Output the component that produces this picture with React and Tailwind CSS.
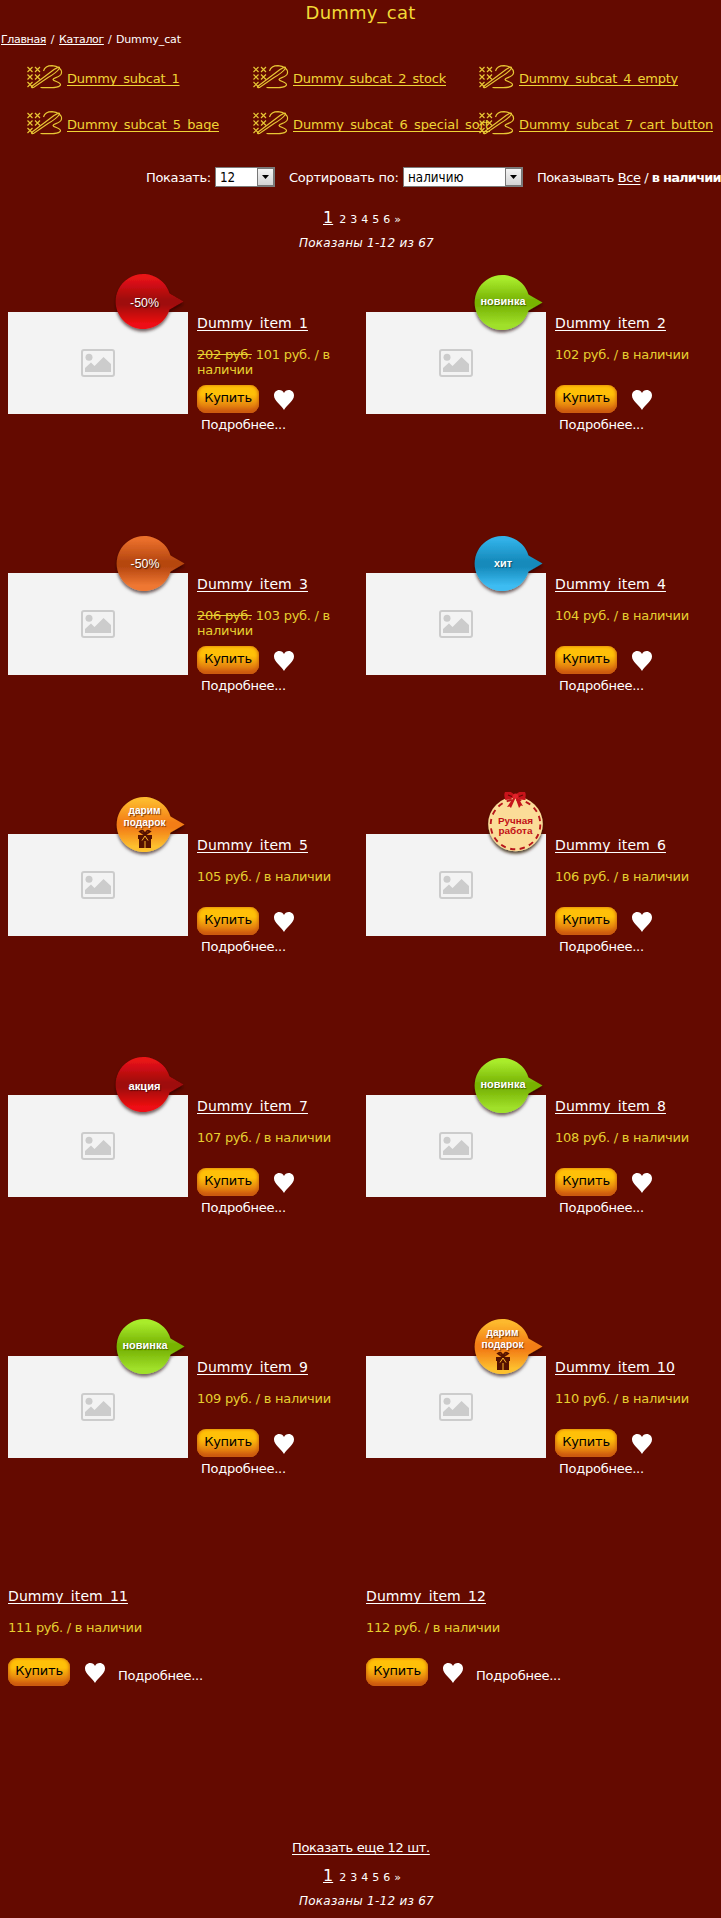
import React from "react";

const subcats = [
  ["Dummy_subcat_1", "tracking-[-0.25px]"],
  ["Dummy_subcat_2_stock", "tracking-[-0.2px]"],
  ["Dummy_subcat_4_empty", "tracking-[-0.26px]"],
  ["Dummy_subcat_5_bage", "tracking-[-0.15px]"],
  ["Dummy_subcat_6_special_sort", "tracking-[-0.1px]"],
  ["Dummy_subcat_7_cart_button", "tracking-[-0.13px]"],
];

const items = [
  { n: 1, old: 202, price: 101, badge: "red", label: "-50%" },
  { n: 2, price: 102, badge: "green", label: "новинка" },
  { n: 3, old: 206, price: 103, badge: "orange", label: "-50%" },
  { n: 4, price: 104, badge: "blue", label: "хит" },
  { n: 5, price: 105, badge: "gift" },
  { n: 6, price: 106, badge: "handmade" },
  { n: 7, price: 107, badge: "red", label: "акция" },
  { n: 8, price: 108, badge: "green", label: "новинка" },
  { n: 9, price: 109, badge: "green", label: "новинка" },
  { n: 10, price: 110, badge: "gift" },
];

const badgeColors = {
  red: ["#e81318", "#9f090b", "#ee0c12"],
  green: ["#a9ec2c", "#78b404", "#a0e02a"],
  orange: ["#ea6f2b", "#b64710", "#ef7733"],
  blue: ["#31b1e8", "#168abb", "#3cbcf2"],
  gift: ["#fdb92d", "#f37d16", "#fdc02f"],
};

function StitchIcon() {
  const crosses = [[0, 2], [7.5, 2], [0, 9.5], [7.5, 9.5], [0, 17]];
  return (
    <svg className="h-6 w-9 shrink-0" viewBox="0 0 36 24" fill="none" stroke="#e8c634" strokeWidth="1.2">
      {crosses.map(([x, y]) => (
        <path key={x + "-" + y} d={`M${x + 0.5} ${y}l5 5M${x + 5.5} ${y}l-5 5`} />
      ))}
      <path d="M4.500 21.500L27 4.500Q34 0 32 4Q29 8 21 12.500L6.500 22.500Q4 23 4.500 21.500Z" />
      <path d="M16.500 6C17.500 2.500 21 0.700 25 0.700C31 1 35 4 34.500 8C34 12.500 26 12.500 26 14.500C26.500 16.500 34 17 33.500 20C32 23.500 22 22.800 13.500 22.500" />
    </svg>
  );
}

function Badge({ type, label }) {
  if (type === "handmade") {
    return (
      <svg className="absolute -top-[42px] left-[114px] h-[72px] w-[72px]" viewBox="0 0 72 72">
        <defs>
          <filter id="hand-shadow" x="-20%" y="-20%" width="150%" height="150%">
            <feDropShadow dx="0" dy="2.500" stdDeviation="1.500" floodColor="#2a1200" floodOpacity="0.8" />
          </filter>
        </defs>
        <circle cx="35.500" cy="32" r="27.300" fill="#fbdc98" filter="url(#hand-shadow)" />
        <circle cx="35.500" cy="32.500" r="24.800" fill="none" stroke="#b8151a" strokeWidth="1.900" strokeDasharray="5.200 4.540" />
        <g fill="#c8141b">
          <path d="M35 4C32-1 26-2 25 0C23 4 26 7 25 8C29 8 33 7 35 4Z" />
          <path d="M35 4C38-1 44-2 45 0C47 4 44 7 46 8C41 8 37 7 35 4Z" />
          <path d="M34 5L27 15L29.500 14.500L31 16L35.500 6L39 16L41 13.500L43 14L37 4Z" />
          <circle cx="35.500" cy="4" r="2.600" fill="#e0232a" />
        </g>
        <path d="M28 3L32 4.500M43 3L39 4.500" stroke="#630a00" strokeWidth="1.300" />
        <g fill="#c20f14" fontFamily="Liberation Sans, sans-serif" fontWeight="700" fontSize="9.500" textAnchor="middle">
          <text x="35.500" y="31.500" textLength="35" lengthAdjust="spacingAndGlyphs">Ручная</text>
          <text x="35.500" y="41.500" textLength="34" lengthAdjust="spacingAndGlyphs">работа</text>
        </g>
      </svg>
    );
  }
  const [top, mid, bottom] = badgeColors[type];
  const discount = label === "-50%";
  const place = type === "red" ? "-top-[42px] left-[103px]" : "-top-[41px] left-[104px]";
  const labelY = type === "red" ? 36.5 : discount ? 36 : label === "хит" ? 35 : 34;
  return (
    <svg className={"absolute h-[72px] w-[80px] " + place} viewBox="0 0 80 72">
      <defs>
        <linearGradient id={"fill-" + type} gradientUnits="userSpaceOnUse" x1="0" y1="5" x2="0" y2="59">
          <stop offset="0.05" stopColor={top} />
          <stop offset="0.45" stopColor={mid} />
          <stop offset="0.55" stopColor={mid} />
          <stop offset="0.9" stopColor={bottom} />
        </linearGradient>
        <filter id={"shadow-" + type} x="-20%" y="-20%" width="150%" height="150%">
          <feDropShadow dx="0" dy="2.500" stdDeviation="1.500" floodColor="#200" floodOpacity="0.6" />
        </filter>
      </defs>
      <path
        d="M58.500 23.500L72.500 31.500L58.500 39.500A27.500 27.500 0 1 1 58.500 23.500Z"
        fill={"url(#fill-" + type + ")"}
        filter={"url(#shadow-" + type + ")"}
      />
      {type === "gift" ? (
        <>
          <g className="[text-shadow:1px_1px_1px_rgba(70,20,0,0.7)]" fill="#fff" fontFamily="Liberation Sans, sans-serif" fontWeight="700" fontSize="10.500" textAnchor="middle">
            <text x="32.500" y="20.500" textLength="32" lengthAdjust="spacingAndGlyphs">дарим</text>
            <text x="32.500" y="32.500" textLength="42" lengthAdjust="spacingAndGlyphs">подарок</text>
          </g>
          <g fill="#551200">
            <path d="M26 42h14v4H26ZM27 46h12v9h-12Z" />
            <path d="M33 42L28 38.500Q32 36 33 42Q34 36 38 38.500Z" fill="none" stroke="#551200" strokeWidth="1.800" />
            <path d="M33 43L30 47.500M33 43L36 47.500M33 48V55" stroke="#fdb62b" strokeWidth="1" />
          </g>
        </>
      ) : (
        <text
          className={discount ? "[text-shadow:1px_1px_1px_rgba(0,0,0,0.7)]" : "[text-shadow:1px_1px_1px_rgba(0,0,0,0.45)]"}
          x={type === "red" ? 33.5 : 33}
          y={labelY}
          fill="#fff"
          fontFamily="Liberation Sans, sans-serif"
          fontWeight={discount ? "400" : "700"}
          fontSize={discount ? "12.500" : "11.500"}
          textAnchor="middle"
          textLength={discount ? 29 : label === "новинка" ? 45 : label === "хит" ? 18 : 32}
          lengthAdjust="spacingAndGlyphs"
        >
          {label}
        </text>
      )}
    </svg>
  );
}

function Placeholder() {
  return (
    <div className="flex h-[102px] w-[180px] items-center justify-center bg-[#f3f3f3]">
      <svg className="h-7 w-[34px]" viewBox="0 0 34 28">
        <rect x="1" y="1" width="32" height="26" rx="2" fill="none" stroke="#cccccc" strokeWidth="2" />
        <circle cx="8" cy="8.300" r="3.500" fill="#cccccc" />
        <path d="M4 23V19L10 13.500L13.500 17L22.500 8L30 15V23Z" fill="#cccccc" />
      </svg>
    </div>
  );
}

function BuyButton() {
  return (
    <button className="h-7 w-[62px] shrink-0 rounded-[9px] bg-linear-to-b from-[#ffc008] from-35% to-[#d4600f] to-95% pb-[2px] text-center text-[13px] leading-[24px] font-normal tracking-[-0.25px] text-black shadow-[inset_0_-2px_4px_#c8540f,inset_0_0_3px_#e08a0c]">
      Купить
    </button>
  );
}

function Heart() {
  return (
    <svg className="h-5 w-5 shrink-0" viewBox="0 0 20 20" fill="#fff">
      <path d="M10 20C7 14.500 0 11 0 5.500C0 2.300 2.300 0 5.200 0C7.500 0 9.200 1.200 10 3C10.800 1.200 12.500 0 14.800 0C17.700 0 20 2.300 20 5.500C20 11 13 14.500 10 20Z" />
    </svg>
  );
}

const titleClass = "block h-5 text-[14px] leading-5 whitespace-nowrap text-white underline [text-decoration-skip-ink:none] underline-offset-2 tracking-[0.1px]";

function Item({ item }) {
  return (
    <div className="flex h-[261px] items-start pt-[42px] pl-2">
      <div className="relative mr-[9px] shrink-0">
        <Placeholder />
        <Badge type={item.badge} label={item.label} />
      </div>
      <div className="w-[150px] pt-px">
        <a className={titleClass}>Dummy_item_{item.n}</a>
        <p className="mt-[14px] h-[38px] w-[145px] text-[13px] leading-[15px] text-[#e6cf30] tracking-[-0.27px]">
          {item.old && <><s>{item.old} руб.</s> </>}
          {item.price} руб. / в наличии
        </p>
        <div className="flex items-start">
          <BuyButton />
          <div className="ml-[15px] pt-[5px]"><Heart /></div>
        </div>
        <a className="ml-1 block pt-1 text-[13px] leading-4 tracking-[-0.25px] text-white">Подробнее...</a>
      </div>
    </div>
  );
}

function PlainItem({ n }) {
  return (
    <div className="flex h-[260px] flex-col pt-[11px] pl-2">
      <a className={titleClass + " self-start"}>Dummy_item_{n}</a>
      <p className="mt-[14px] h-[38px] text-[13px] leading-[15px] text-[#e6cf30] tracking-[-0.27px]">{n + 100} руб. / в наличии</p>
      <div className="flex items-start">
        <BuyButton />
        <div className="ml-[15px] pt-[5px]"><Heart /></div>
        <a className="ml-[13px] pt-[10px] text-[13px] leading-4 tracking-[-0.25px] text-white">Подробнее...</a>
      </div>
    </div>
  );
}

function Select({ value, className }) {
  return (
    <div className={"flex h-5 shrink-0 border border-[#7b7b7b] bg-white pl-[4px] text-black " + className}>
      <span className="flex-1 [font-family:'DejaVu_Sans_Condensed','DejaVu_Sans',sans-serif] [font-stretch:condensed] text-[13.3px] leading-[19px]">{value}</span>
      <span className="flex w-[17px] items-center justify-center border border-[#777] bg-linear-to-b from-[#f4f4f4] to-[#d4d4d4]">
        <svg className="h-1 w-[7px]" viewBox="0 0 7 4"><path d="M0 0H7L3.500 4Z" fill="#000" /></svg>
      </span>
    </div>
  );
}

function Pager() {
  return (
    <div className="flex h-5 items-baseline pl-[323px] text-[11px] leading-5 whitespace-pre">
      <span className="mr-[6px] text-[16px] leading-5 underline underline-offset-1 [text-decoration-skip-ink:none]">1</span>
      <span className="tracking-[0.25px]">2 3 4 5 6 »</span>
    </div>
  );
}

export default function App() {
  return (
    <main className="h-[1918px] w-[721px] overflow-hidden bg-[#640a00] text-white [font-family:Verdana,'DejaVu_Sans',sans-serif]">
      <h1 className="h-[26px] text-center text-[18px] leading-[26px] tracking-[0.2px] text-[#f2d936]">Dummy_cat</h1>
      <nav className="flex h-[26px] pt-px pl-px text-[11px] leading-[26px] whitespace-pre">
        <a className="tracking-[-0.35px] underline [text-decoration-skip-ink:none]">Главная</a>
        <span className="w-[13px] text-center">/</span>
        <a className="tracking-[-0.35px] underline [text-decoration-skip-ink:none]">Каталог</a>
        <span className="w-[12px] text-center">/</span>
        <span className="tracking-[-0.1px]">Dummy_cat</span>
      </nav>
      <div className="grid h-[108px] grid-cols-[226px_226px_226px] auto-rows-[46px] pt-[13px] pl-[27px]">
        {subcats.map(([name, tracking]) => (
          <a key={name} className="flex h-6 items-start text-[#f0d536]">
            <StitchIcon />
            <span className={"mt-[5px] ml-1 h-[16px] shrink-0 overflow-hidden text-[13px] leading-[17px] whitespace-nowrap underline underline-offset-2 [text-decoration-skip-ink:none] " + tracking}>{name}</span>
          </a>
        ))}
      </div>
      <div className="flex h-[43px] items-start pt-[7px] pl-[146px] text-[13px] leading-[21px] whitespace-nowrap">
        <span className="w-[69px] shrink-0 tracking-[-0.35px]">Показать:</span>
        <Select value="12" className="w-[60px]" />
        <span className="ml-[14px] w-[114px] shrink-0 tracking-[-0.25px]">Сортировать по:</span>
        <Select value="наличию" className="w-[120px]" />
        <span className="ml-[14px] shrink-0 tracking-[-0.45px] whitespace-pre">Показывать <a className="underline underline-offset-2">Все</a> / <b className="tracking-[-0.8px]">в наличии</b></span>
      </div>
      <div className="h-[67px] pt-[5px]">
        <Pager />
        <p className="pl-[299px] pt-[5px] text-[12px] leading-5 tracking-[0.25px] italic">Показаны 1-12 из 67</p>
      </div>
      <div className="grid grid-cols-[358px_358px]">
        {items.map((item) => <Item key={item.n} item={item} />)}
        <PlainItem n={11} />
        <PlainItem n={12} />
      </div>
      <div className="pt-[3px]">
        <p className="h-5 pl-[292px] text-[13px] leading-5 tracking-[-0.35px]"><a className="underline underline-offset-2 [text-decoration-skip-ink:none]">Показать еще 12 шт.</a></p>
        <div className="pt-2"><Pager /></div>
        <p className="pl-[299px] pt-[5px] text-[12px] leading-5 tracking-[0.25px] italic">Показаны 1-12 из 67</p>
      </div>
    </main>
  );
}
